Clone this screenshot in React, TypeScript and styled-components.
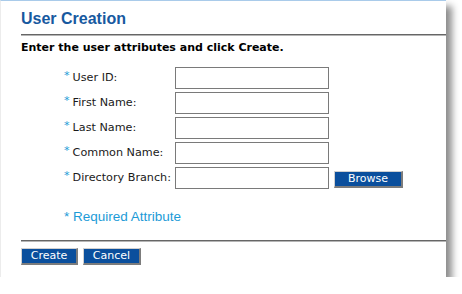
import { Fragment } from 'react';
import styled, { createGlobalStyle } from 'styled-components';

const GlobalStyle = createGlobalStyle`
  body {
    margin: 0;
    background: #ffffff;
  }
`;

const Panel = styled.div`
  box-sizing: border-box;
  width: 446px;
  height: 277px;
  background: #ffffff;
  border-top: 1px solid #a9cbea;
  border-left: 1px solid #ececec;
  box-shadow: 6px 6px 7px rgba(0, 0, 0, 0.45);
  padding: 0 0 0 20px;
  font-family: 'DejaVu Sans', Verdana, sans-serif;
  font-size: 11px;
  color: #1a1a1a;
`;

const Title = styled.h1`
  margin: 0;
  padding-top: 8px;
  height: 24px;
  font-family: 'Liberation Sans', Arial, sans-serif;
  font-size: 16px;
  font-weight: bold;
  line-height: 20px;
  color: #17599f;
`;

const Rule = styled.div<{ $top: number }>`
  margin-top: ${p => p.$top}px;
  height: 2px;
  background: linear-gradient(#666 0 50%, #b5b5b5 50% 100%);
`;

const Intro = styled.p`
  margin: 5px 0 0;
  font-weight: bold;
  font-size: 11px;
  line-height: 14px;
  color: #000;
`;

const Form = styled.div`
  display: grid;
  grid-template-columns: 111px 154px auto;
  grid-auto-rows: 22px;
  row-gap: 3px;
  align-items: center;
  margin: 12px 0 0 43px;
`;

const Label = styled.label`
  white-space: nowrap;
  line-height: 14px;
  font-size: 11.2px;
`;

const Star = styled.span`
  color: #1c9bd7;
  margin-right: 3px;
  position: relative;
  top: -2px;
`;

const Field = styled.input`
  box-sizing: border-box;
  width: 154px;
  height: 22px;
  margin: 0;
  border: 1px solid #7a7a7a;
  background: #fff;
`;

const Btn = styled.button<{ $w: number }>`
  box-sizing: border-box;
  width: ${p => p.$w}px;
  height: 17px;
  margin: 0;
  padding: 0 0 1px;
  background: #0a4f9d;
  color: #ffffff;
  font-family: 'DejaVu Sans', Verdana, sans-serif;
  font-size: 11px;
  line-height: 13px;
  border-style: solid;
  border-width: 1px 2px 2px 1px;
  border-color: #d0d0d0 #7c7c7c #7c7c7c #d0d0d0;
  cursor: pointer;
`;

const BrowseCell = styled.div`
  padding-left: 5px;
  display: flex;
  align-items: center;
  padding-top: 3px;
`;

const Required = styled.p`
  margin: 20px 0 0 43px;
  font-family: 'Liberation Sans', Arial, sans-serif;
  font-size: 13.5px;
  line-height: 16px;
  color: #1c9bd7;
`;

const Actions = styled.div`
  display: flex;
  gap: 5px;
  margin-top: 6px;
`;

const fields = ['User ID:', 'First Name:', 'Last Name:', 'Common Name:', 'Directory Branch:'];

export default function App() {
  return (
    <>
      <GlobalStyle />
      <Panel>
        <Title>User Creation</Title>
        <Rule $top={1} />
        <Intro>Enter the user attributes and click Create.</Intro>
        <Form>
          {fields.map((f, i) => (
            <Fragment key={f}>
              <Label>
                <Star>*</Star>
                {f}
              </Label>
              <Field type='text' />
              {i === fields.length - 1 ? (
                <BrowseCell>
                  <Btn $w={69}>Browse</Btn>
                </BrowseCell>
              ) : (
                <div />
              )}
            </Fragment>
          ))}
        </Form>
        <Required>* Required Attribute</Required>
        <Rule $top={15} />
        <Actions>
          <Btn $w={57}>Create</Btn>
          <Btn $w={58}>Cancel</Btn>
        </Actions>
      </Panel>
    </>
  );
}
